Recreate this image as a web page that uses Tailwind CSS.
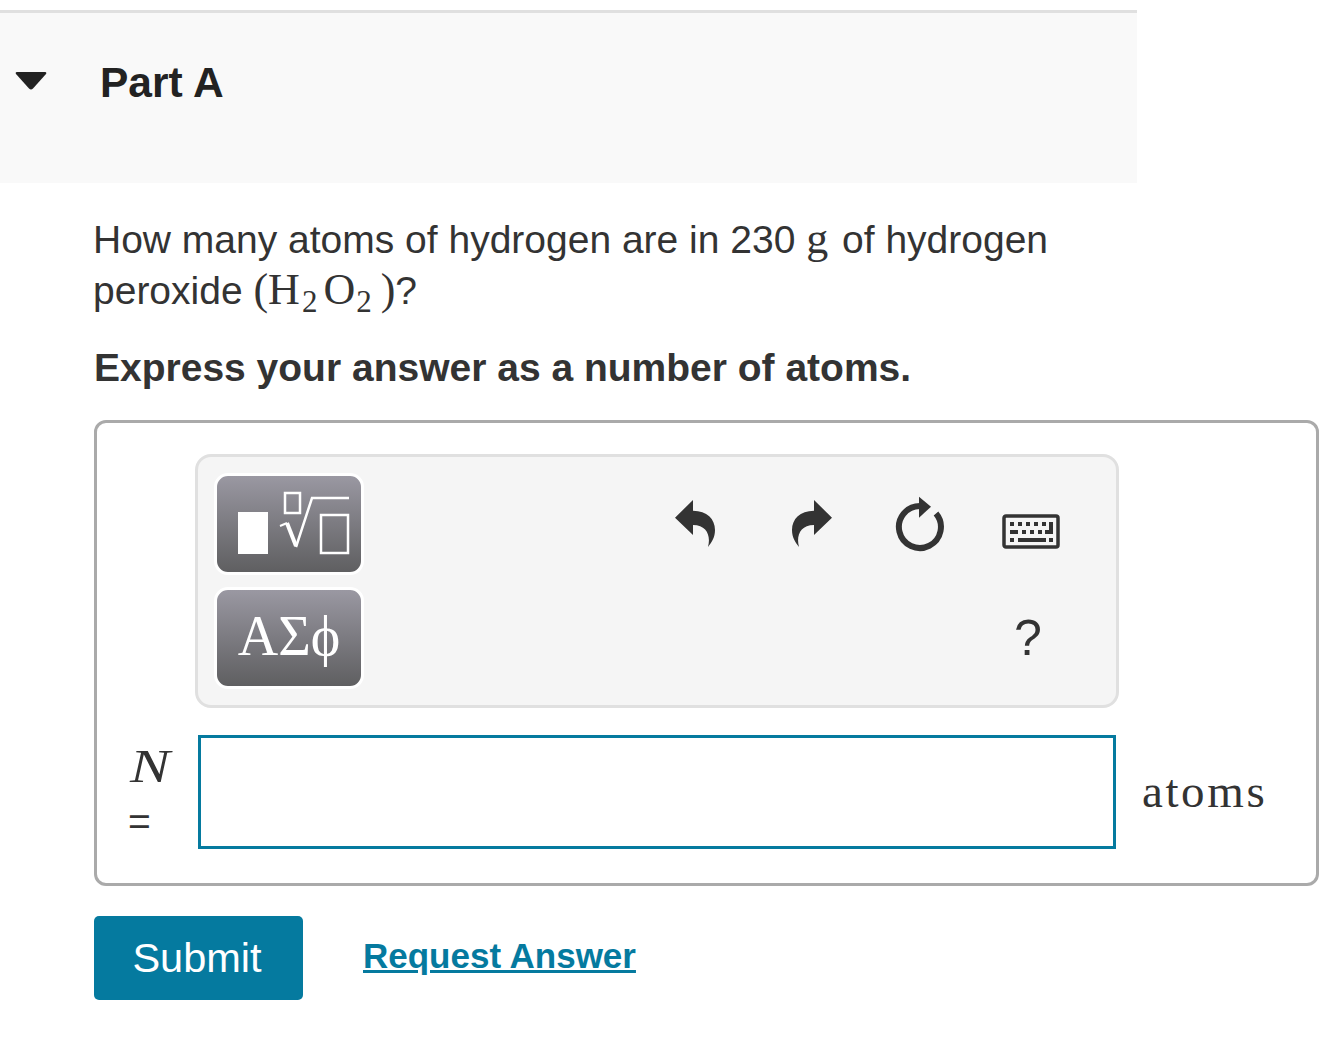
<!DOCTYPE html>
<html><head><meta charset="utf-8"><script src="https://cdn.jsdelivr.net/npm/@tailwindcss/browser@4"></script></head>
<body class="bg-white overflow-hidden">
<div class="w-[1320px] h-[1057px] pt-[10px] font-['Liberation_Sans',sans-serif] text-[#333]">
  <section class="w-[1137px] h-[173px] bg-[#f9f9f9] border-t-[3px] border-[#e0e0e0] flex items-start">
    <svg class="w-[32px] h-[18px] ml-[15px] mt-[59px]" viewBox="0 0 32 18"><path d="M1 2 Q0 0 2 0 H30 Q32 0 31 2 L18 16.500 Q16 18.500 14 16.500Z" fill="#222"/></svg>
    <h2 class="ml-[53px] mt-[46px] text-[42.5px] leading-[48px] font-bold text-[#222]">Part A</h2>
  </section>
  <div class="pl-[94px]">
    <p class="mt-[31px] w-[1000px] -ml-[1px] text-[39px] leading-[51px]">How many atoms of hydrogen are in 230 <span class="font-['Liberation_Serif',serif] text-[44px] leading-[40px] mr-[3px]">g</span> of hydrogen<br>peroxide <span class="font-['Liberation_Serif',serif] text-[44px] leading-[40px]">(H<sub class="text-[31px] ml-[2px]">2</sub><span class="ml-[6px]">O</span><sub class="text-[31px] ml-[1px]">2</sub><span class="ml-[9px]">)</span></span>?</p>
    <p class="mt-[26px] text-[39px] leading-[51px] font-bold">Express your answer as a number of atoms.</p>
    <div class="mt-[27px] w-[1225px] h-[466px] border-[3px] border-[#aaa] rounded-[12px] pl-[98px] pt-[31px] relative">
      <div class="w-[924px] h-[254px] bg-[#f5f5f5] border-[3px] border-[#e0e0e0] rounded-[16px] relative pl-[16px] pt-[16px]">
        <div class="w-[150px] h-[102px] rounded-[14px] border-[3px] border-white bg-gradient-to-b from-[#9a98a2] to-[#5f5f61]">
          <svg class="w-[144px] h-[96px]" viewBox="0 0 144 96" fill="none"><rect x="21" y="36" width="30" height="42" fill="#fff"/><rect x="68" y="17" width="15" height="20" stroke="#fff" stroke-width="2.500"/><path d="M63 50 L70 47" stroke="#fff" stroke-width="2"/><path d="M70 47 L79 70" stroke="#fff" stroke-width="4"/><path d="M79 71 L95 22 H132" stroke="#fff" stroke-width="2.500"/><rect x="104" y="39" width="27" height="38" stroke="#fff" stroke-width="2.500"/></svg>
        </div>
        <div class="mt-[12px] w-[150px] h-[102px] rounded-[14px] border-[3px] border-white bg-gradient-to-b from-[#9a98a2] to-[#5f5f61] flex items-center justify-center pb-[4px] text-white font-['Liberation_Serif',serif] text-[56px] leading-none">ΑΣϕ</div>
        <svg class="absolute left-[477px] top-[43px] w-[40px] h-[47px]" viewBox="0 0 40 47"><path d="M18 0 V10.700 C32 10.700 40 19 40 30 C40 37 37 42 33 47 C36 36 32 25 18 25 V35 L0 17.700Z" fill="#333"/></svg>
        <svg class="absolute left-[594px] top-[43px] w-[40px] h-[47px]" viewBox="0 0 40 47"><path d="M22 0 V10.700 C8 10.700 0 19 0 30 C0 37 3 42 7 47 C4 36 8 25 22 25 V35 L40 17.700Z" fill="#333"/></svg>
        <svg class="absolute left-[692px] top-[33px] w-[60px] h-[70px]" viewBox="0 0 60 70" fill="none"><path d="M46 23.500 A21 21 0 1 1 30 16" stroke="#333" stroke-width="6"/><path d="M29 6.700 L41 16.700 L29 27.700Z" fill="#333"/></svg>
        <svg class="absolute left-[804px] top-[57px] w-[58px] h-[35px]" viewBox="0 0 58 35"><rect x="2" y="2" width="54" height="31" rx="2" fill="none" stroke="#333" stroke-width="3.500"/><g fill="#333"><rect x="8" y="8" width="4" height="4"/><rect x="16" y="8" width="4" height="4"/><rect x="24" y="8" width="4" height="4"/><rect x="32" y="8" width="4" height="4"/><rect x="40" y="8" width="4" height="4"/><path d="M47 8 H51 V20 H43 V16 H47Z"/><rect x="8" y="16" width="8" height="4"/><rect x="20" y="16" width="4" height="4"/><rect x="28" y="16" width="4" height="4"/><rect x="36" y="16" width="4" height="4"/><rect x="8" y="24" width="4" height="4"/><rect x="16" y="24" width="28" height="4"/><rect x="47" y="24" width="4" height="4"/></g></svg>
        <span class="absolute left-[816px] top-[152px] text-[50px] leading-[58px]">?</span>
      </div>
      <span class="absolute left-[33px] top-[319px] font-['Liberation_Serif',serif] italic text-[46px] leading-[50px] origin-left scale-x-[1.3]">N</span>
      <span class="absolute left-[31px] top-[379px] text-[39px] leading-[40px]">=</span>
      <div class="mt-[27px] w-[918px] h-[114px] border-[3px] border-[#057a9f] ml-[3px] bg-white"></div>
      <span class="absolute left-[1045px] top-[342px] font-['Liberation_Serif',serif] text-[47px] leading-[52px] tracking-[2.6px]">atoms</span>
    </div>
    <div class="mt-[30px] flex items-center">
      <button class="w-[209px] h-[84px] bg-[#057a9f] rounded-[5px] pr-[3px] text-white text-[41.5px]">Submit</button>
      <a class="ml-[60px] mb-[4px] text-[35px] font-bold text-[#057a9f] underline">Request Answer</a>
    </div>
  </div>
</div>
</body></html>
